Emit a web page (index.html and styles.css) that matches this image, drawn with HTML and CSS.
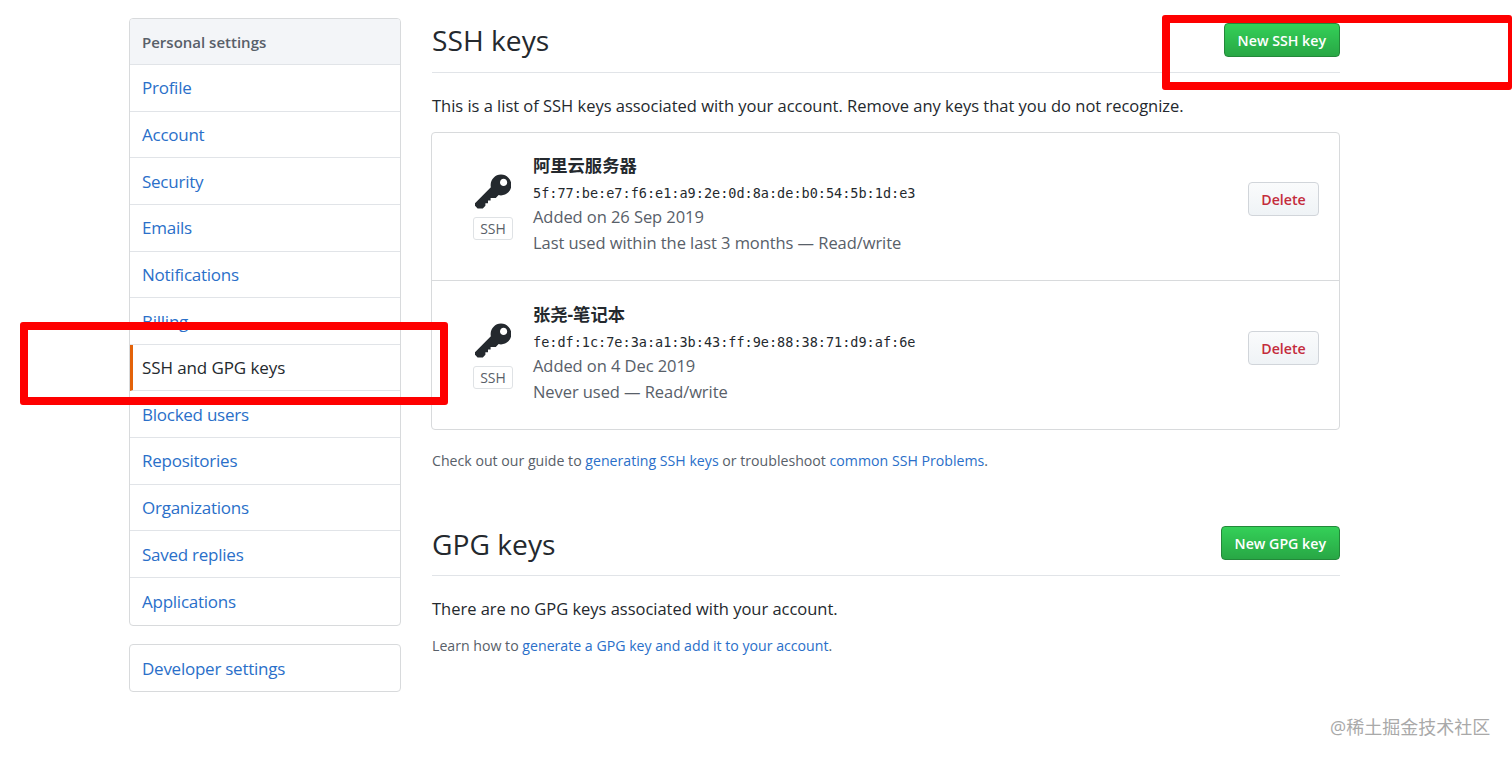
FILE: index.html
```html
<!DOCTYPE html>
<html lang="en">
<head>
<meta charset="utf-8">
<title>SSH and GPG keys</title>
<link rel="stylesheet" href="styles.css">
</head>
<body>
<div class="page">
  <aside class="sidebar">
    <nav class="menu">
      <div class="menu-head">Personal settings</div>
      <a class="menu-item">Profile</a>
      <a class="menu-item">Account</a>
      <a class="menu-item">Security</a>
      <a class="menu-item">Emails</a>
      <a class="menu-item">Notifications</a>
      <a class="menu-item">Billing</a>
      <a class="menu-item selected">SSH and GPG keys</a>
      <a class="menu-item">Blocked users</a>
      <a class="menu-item">Repositories</a>
      <a class="menu-item">Organizations</a>
      <a class="menu-item">Saved replies</a>
      <a class="menu-item">Applications</a>
    </nav>
    <nav class="menu dev">
      <a class="menu-item">Developer settings</a>
    </nav>
  </aside>
  <main class="content">
    <header class="subhead">
      <h2>SSH keys</h2>
      <a class="btn-green ssh">New SSH key</a>
    </header>
    <p class="intro">This is a list of SSH keys associated with your account. Remove any keys that you do not recognize.</p>
    <div class="keys">
      <div class="key-row">
        <div class="key-icon">
          <svg class="key-svg" viewBox="0 0 14 16"><path fill-rule="evenodd" d="M12.83 2.17C12.08 1.42 11.14 1.03 10 1c-1.13.03-2.08.42-2.83 1.17S6.04 3.86 6.01 5c0 .3.03.59.09.89L0 12v1l1 1h2l1-1v-1h1v-1h1v-1h2l1.09-1.11c.3.08.59.11.91.11 1.14-.03 2.08-.42 2.83-1.17S13.97 6.14 14 5c-.03-1.14-.42-2.08-1.17-2.83zM11 5.38c-.77 0-1.38-.61-1.38-1.38 0-.77.61-1.38 1.38-1.38.77 0 1.38.61 1.38 1.38 0 .77-.61 1.38-1.38 1.38z"/></svg>
          <span class="label">SSH</span>
        </div>
        <div class="key-info">
          <strong class="key-name">阿里云服务器</strong>
          <code class="fingerprint">5f:77:be:e7:f6:e1:a9:2e:0d:8a:de:b0:54:5b:1d:e3</code>
          <span class="meta">Added on 26 Sep 2019</span>
          <span class="meta">Last used within the last 3 months — Read/write</span>
        </div>
        <a class="btn-delete">Delete</a>
      </div>
      <div class="key-row">
        <div class="key-icon">
          <svg class="key-svg" viewBox="0 0 14 16"><path fill-rule="evenodd" d="M12.83 2.17C12.08 1.42 11.14 1.03 10 1c-1.13.03-2.08.42-2.83 1.17S6.04 3.86 6.01 5c0 .3.03.59.09.89L0 12v1l1 1h2l1-1v-1h1v-1h1v-1h2l1.09-1.11c.3.08.59.11.91.11 1.14-.03 2.08-.42 2.83-1.17S13.97 6.14 14 5c-.03-1.14-.42-2.08-1.17-2.83zM11 5.38c-.77 0-1.38-.61-1.38-1.38 0-.77.61-1.38 1.38-1.38.77 0 1.38.61 1.38 1.38 0 .77-.61 1.38-1.38 1.38z"/></svg>
          <span class="label">SSH</span>
        </div>
        <div class="key-info">
          <strong class="key-name">张尧-笔记本</strong>
          <code class="fingerprint">fe:df:1c:7e:3a:a1:3b:43:ff:9e:88:38:71:d9:af:6e</code>
          <span class="meta">Added on 4 Dec 2019</span>
          <span class="meta">Never used — Read/write</span>
        </div>
        <a class="btn-delete">Delete</a>
      </div>
    </div>
    <p class="note">Check out our guide to <a>generating SSH keys</a> or troubleshoot <a>common SSH Problems</a>.</p>
    <header class="subhead gpg">
      <h2>GPG keys</h2>
      <a class="btn-green">New GPG key</a>
    </header>
    <p class="intro">There are no GPG keys associated with your account.</p>
    <p class="note learn">Learn how to <a>generate a GPG key and add it to your account</a>.</p>
  </main>
</div>
<div class="mark mark-new"></div>
<div class="mark mark-side"></div>
<div class="watermark">@稀土掘金技术社区</div>
</body>
</html>
```
FILE: styles.css
```css
* { box-sizing: border-box; }
html, body { margin: 0; height: 758px; overflow: hidden; background: #fff; }
body { font-family: "Open Sans", "Noto Sans CJK SC", sans-serif; color: #24292e; position: relative; }
.page { display: flex; align-items: flex-start; padding: 18px 0 0 129px; gap: 31px; }
.sidebar { width: 272px; flex: none; display: flex; flex-direction: column; gap: 18px; }
.menu { display: flex; flex-direction: column; border: 1px solid #d8dadc; border-radius: 4px; overflow: hidden; }
.menu-head { height: 46px; padding-left: 12px; display: flex; align-items: center; font-size: 15px; font-weight: 600; color: #586069; background: #f3f5f8; border-bottom: 1px solid #e1e4e8; }
.menu-item { height: 46.65px; padding-left: 12px; display: flex; align-items: center; font-size: 17px; letter-spacing: -.25px; color: #2a6fc9; border-bottom: 1px solid #e1e4e8; }
.menu-item:last-child { border-bottom: 0; }
.menu-item.selected { color: #24292e; font-weight: 500; letter-spacing: -.1px; border-left: 3px solid #e36209; padding-left: 9px; }
.dev .menu-item { height: 46px; padding-top: 1px; }
.content { width: 908px; flex: none; }
.subhead { height: 55px; display: flex; justify-content: space-between; align-items: flex-start; border-bottom: 1px solid #e1e4e8; }
.subhead h2 { margin: 0; padding-top: 2px; font-size: 28.2px; font-weight: 400; line-height: 40px; }
.btn-green { height: 34px; margin-top: 5px; padding: 0 13px; display: flex; align-items: center; font-size: 14.2px; font-weight: 600; color: #fff; border: 1px solid #23883a; border-radius: 4px; background: linear-gradient(#34d058, #28a745); }
.intro { margin: 20px 0 0; font-size: 16.5px; line-height: 26px; letter-spacing: -.02px; }
.keys { margin: 13px 0 0 -1px; width: 909px; border: 1px solid #d8dadc; border-radius: 4px; }
.key-row { height: 148px; padding: 19px 20px 0 31px; display: flex; align-items: flex-start; border-bottom: 1px solid #d8dadc; }
.key-row + .key-row { padding-top: 20px; border-bottom: 0; }
.key-icon { width: 60px; flex: none; margin: 20px 10px 0 0; display: flex; flex-direction: column; align-items: center; }
.key-svg { width: 36.4px; height: 41.6px; fill: #24292e; display: block; }
.label { margin-top: 3px; height: 23px; width: 40px; display: flex; align-items: center; justify-content: center; font-size: 14px; color: #586069; border: 1px solid #dfe2e5; border-radius: 3px; }
.key-info { flex: 1; display: flex; flex-direction: column; }
.key-name { font-size: 17.3px; line-height: 28px; font-weight: 700; }
.fingerprint { font-family: "DejaVu Sans Mono", monospace; font-size: 13.53px; line-height: 26px; margin-bottom: -2px; }
.meta { font-size: 16.5px; line-height: 26px; color: #586069; letter-spacing: -.07px; }
.btn-delete { height: 34px; width: 71px; margin-top: 30px; display: flex; align-items: center; justify-content: center; font-size: 14.2px; font-weight: 600; color: #c42c3c; border: 1px solid #d1d5da; border-radius: 4px; background: linear-gradient(#fafbfc, #eff3f6); }
.note { margin: 21px 0 0; font-size: 14.15px; line-height: 20px; color: #586069; }
.note a { color: #2a6fc9; }
.gpg { margin-top: 51px; height: 54px; }
.gpg .btn-green { margin-top: 4px; }
.gpg h2 { padding-top: 2px; }
.learn { margin-top: 14px; }
.mark { position: absolute; border: 8px solid #fe0000; border-radius: 3px; }
.mark-new { left: 1162px; top: 15px; width: 350px; height: 75px; border-width: 8px 4px 8px 8px; }
.mark-side { left: 20px; top: 322px; width: 428px; height: 83px; }
.watermark { position: absolute; left: 1330px; top: 715px; font-size: 18px; line-height: 24px; color: #a9a9a9; }
```
